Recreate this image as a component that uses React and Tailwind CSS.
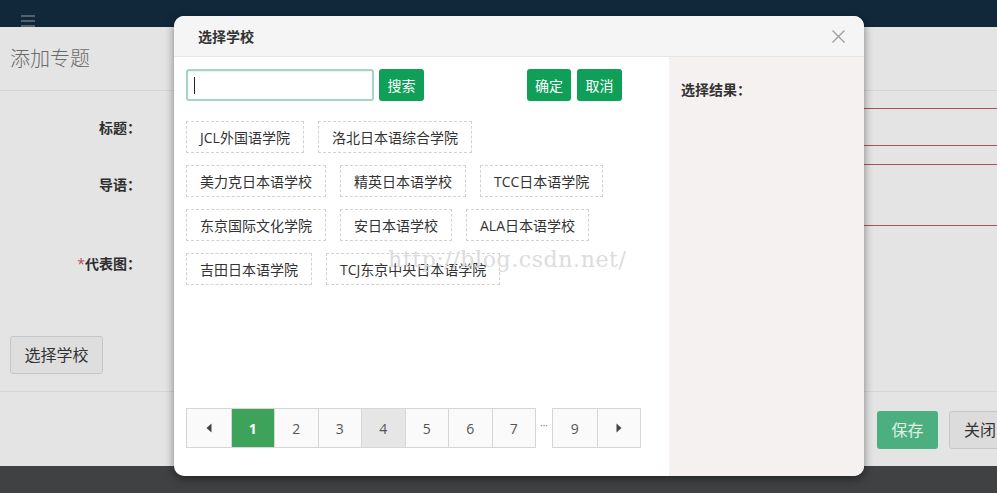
import React from 'react';

const rows = [
  ['JCL外国语学院', '洛北日本语综合学院'],
  ['美力克日本语学校', '精英日本语学校', 'TCC日本语学院'],
  ['东京国际文化学院', '安日本语学校', 'ALA日本语学校'],
  ['吉田日本语学院', 'TCJ东京中央日本语学院'],
];

const Tri = ({ dir }) => (
  <svg width="6" height="10" viewBox="0 0 6 10">
    {dir === 'left' ? <path d="M5.5 0.5 L0.5 5 L5.5 9.5 Z" fill="#444" /> : <path d="M0.5 0.5 L5.5 5 L0.5 9.5 Z" fill="#444" />}
  </svg>
);

const PageCell = ({ children, active, hover }) => (
  <div
    className={
      'w-[43.5px] h-full flex items-center justify-center border-l border-[#d6d6d6] first:border-l-0 text-[14px] ' +
      (active ? 'bg-[#3da35a] text-white font-bold' : hover ? 'bg-[#e6e6e6] text-[#555]' : 'bg-[#fafafa] text-[#555]')
    }
  >
    {children}
  </div>
);

const Modal = () => (
  <div className="absolute left-[174px] top-[16px] w-[690px] h-[460px] bg-white rounded-[10px] overflow-hidden shadow-[0_3px_10px_rgba(0,0,0,0.45)] flex flex-col">
    <div className="h-[41px] shrink-0 bg-[#f5f5f5] border-b border-[#e6e6e6] flex items-center justify-between pl-[24px] pr-[19px]">
      <span className="text-[14px] font-bold text-[#333]">选择学校</span>
      <svg width="13" height="13" viewBox="0 0 13 13">
        <path d="M0.5 0.5 L12.5 12.5 M12.5 0.5 L0.5 12.5" stroke="#9a9a9a" strokeWidth="1.2" />
      </svg>
    </div>
    <div className="flex flex-1 min-h-0">
      <div className="w-[495px] flex flex-col pl-[12px] pt-[12px] pb-[28px] relative">
        <div className="flex items-center h-[32px]">
          <div className="w-[188px] h-[32px] border-2 border-[#a6d5c1] rounded-[3px] flex items-center pl-[6px] shadow-[inset_0_1px_2px_rgba(0,0,0,0.08)]">
            <span className="w-px h-[17px] bg-[#222]" />
          </div>
          <button className="ml-[5px] w-[45px] h-[32px] bg-[#0f9f59] text-white text-[14px] rounded-[3px]">搜索</button>
          <button className="ml-[103px] w-[44px] h-[32px] bg-[#0f9f59] text-white text-[14px] rounded-[3px]">确定</button>
          <button className="ml-[6px] w-[45px] h-[32px] bg-[#0f9f59] text-white text-[14px] rounded-[3px]">取消</button>
        </div>
        <div className="mt-[20px] flex flex-col gap-y-[12px]">
          {rows.map((r, i) => (
            <div key={i} className="flex gap-x-[14px]">
              {r.map((t) => (
                <div key={t} className="h-[32px] px-[13px] flex items-center border border-dashed border-[#d2d2d2] text-[14px] text-[#333] whitespace-nowrap">
                  {t}
                </div>
              ))}
            </div>
          ))}
        </div>
        <div className="mt-auto flex items-center h-[40px]">
          <div className="flex h-full border border-[#d6d6d6]">
            <PageCell><Tri dir="left" /></PageCell>
            <PageCell active>1</PageCell>
            <PageCell>2</PageCell>
            <PageCell>3</PageCell>
            <PageCell hover>4</PageCell>
            <PageCell>5</PageCell>
            <PageCell>6</PageCell>
            <PageCell>7</PageCell>
          </div>
          <span className="w-[16px] text-center text-[10px] text-[#777] leading-none -mt-[6px]">···</span>
          <div className="flex h-full border border-[#d6d6d6]">
            <PageCell>9</PageCell>
            <PageCell><Tri dir="right" /></PageCell>
          </div>
        </div>
        <span className="absolute left-[214px] top-[186px] text-[22px] text-[#dcdcdc] font-['DejaVu_Serif',serif] tracking-[0.6px] pointer-events-none">
          http://blog.csdn.net/
        </span>
      </div>
      <div className="flex-1 bg-[#f4f1f0] pl-[12px] pt-[20px]">
        <span className="text-[14px] font-bold text-[#333] leading-[20px]">选择结果：</span>
      </div>
    </div>
  </div>
);

const App = () => (
  <div className="relative w-[997px] h-[493px] overflow-hidden bg-[#3f4143] flex flex-col font-['Open_Sans','Noto_Sans_CJK_SC',sans-serif]">
    <div className="h-[27px] shrink-0 bg-[#10283a] pl-[21px] pt-[15px]">
      <div className="w-[14px] flex flex-col gap-[3px]">
        <span className="h-[2px] bg-[#56636e]" />
        <span className="h-[2px] bg-[#56636e]" />
        <span className="h-[2px] bg-[#56636e]" />
      </div>
    </div>
    <div className="h-[439px] shrink-0 bg-[#e4e4e4] flex flex-col">
      <div className="h-[64px] shrink-0 border-b border-[#d6d6d6] flex items-center pl-[10px]">
        <span className="text-[20px] text-[#6a6a6a] font-light">添加专题</span>
      </div>
      <div className="flex-1 flex flex-col pt-[17px] border-b border-[#d6d6d6]">
        <div className="flex items-center h-[38px]">
          <label className="w-[141px] text-right text-[14px] font-bold text-[#2e2e2e]">标题：</label>
          <div className="ml-[40px] flex-1 h-[38px] border-y border-[#a8525e]" />
        </div>
        <div className="flex mt-[18px]">
          <label className="w-[141px] text-right text-[14px] font-bold text-[#2e2e2e] pt-[10px]">导语：</label>
          <div className="ml-[40px] flex-1 h-[62px] border-y border-[#a8525e]" />
        </div>
        <div className="flex items-center mt-[27px] h-[20px]">
          <label className="w-[141px] text-right text-[14px] font-bold text-[#2e2e2e]">
            <span className="text-[#b05060] font-normal">*</span>代表图：
          </label>
        </div>
        <div className="mt-[63px] pl-[10px]">
          <button className="w-[93px] h-[38px] bg-[#dedede] border border-[#c6c6c6] rounded-[3px] text-[16px] text-[#333]">选择学校</button>
        </div>
      </div>
      <div className="h-[74px] shrink-0 flex justify-end items-start pt-[19px] gap-[11px] -mr-[14px]">
        <button className="w-[61px] h-[38px] bg-[#4caf80] rounded-[3px] text-[16px] text-[#e2f1e8]">保存</button>
        <button className="w-[62px] h-[38px] bg-[#dcdcdc] border border-[#c6c6c6] rounded-[3px] text-[16px] text-[#333]">关闭</button>
      </div>
    </div>
    <Modal />
  </div>
);

export default App;
